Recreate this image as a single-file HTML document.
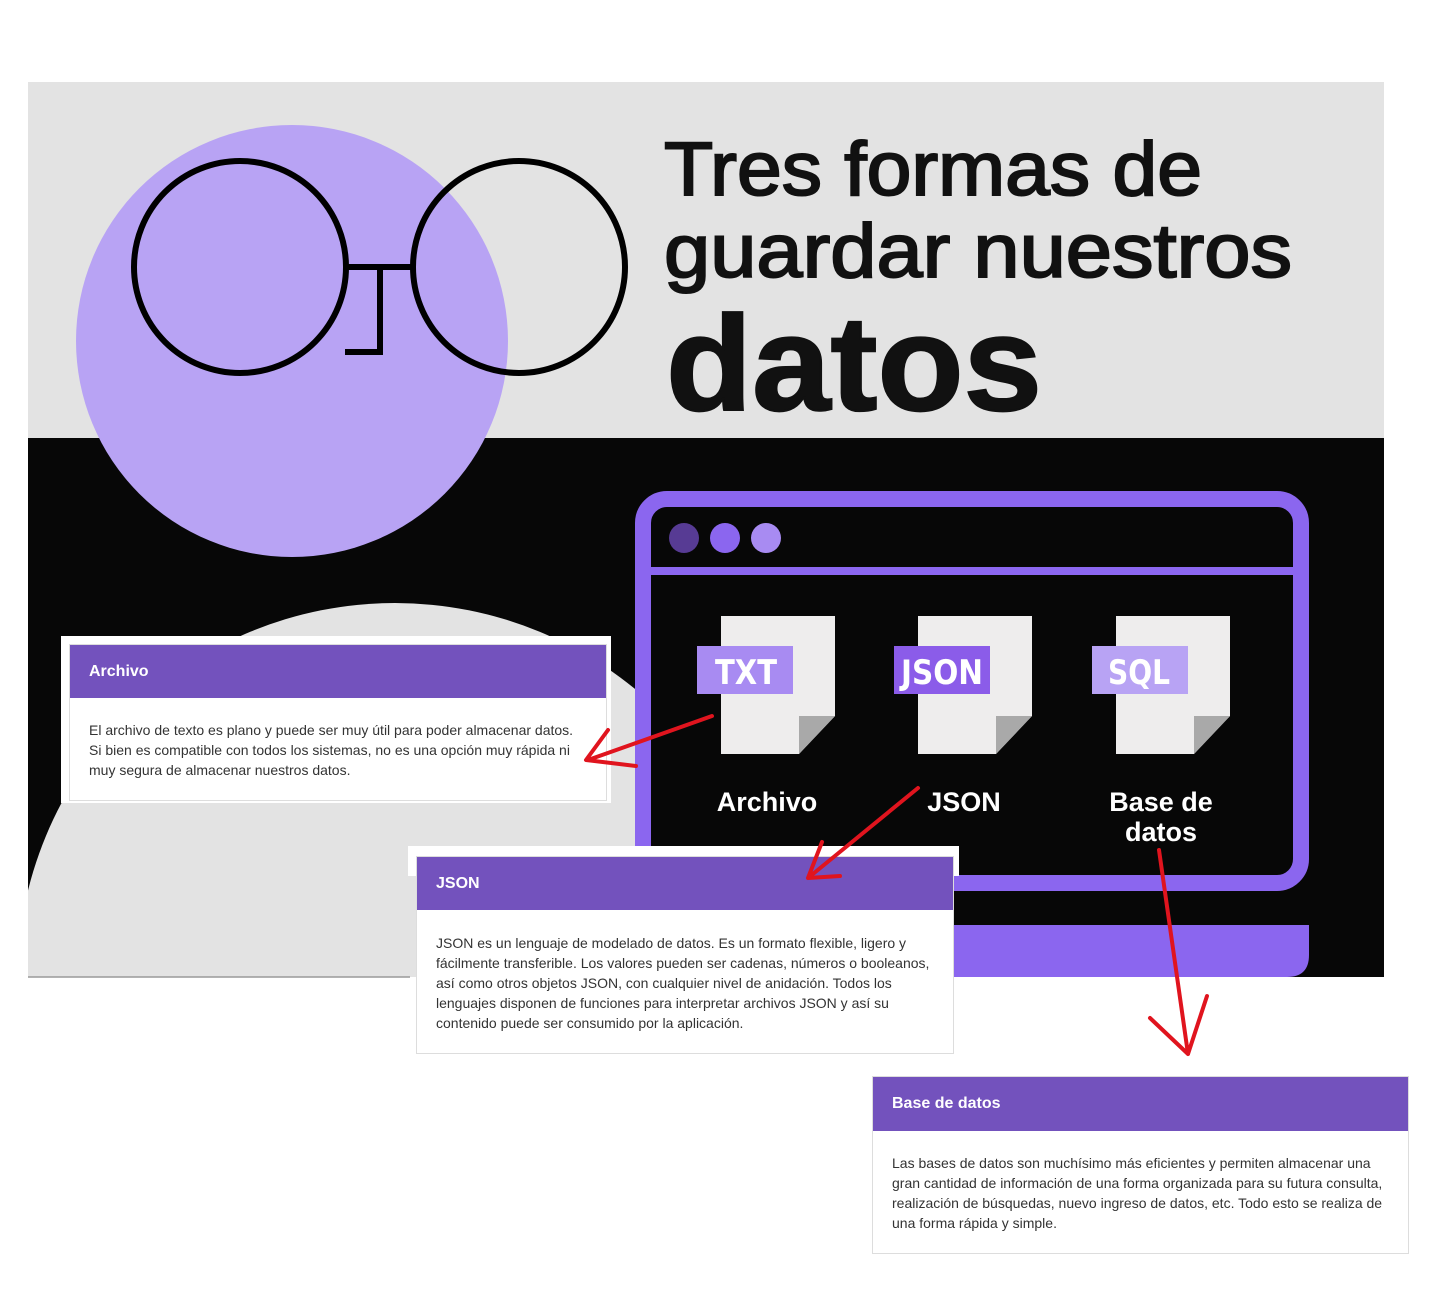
<!DOCTYPE html>
<html><head><meta charset="utf-8"><style>
body{margin:0;width:1448px;height:1308px;background:#fff;position:relative;overflow:hidden;font-family:"Liberation Sans",Arial,sans-serif}
.card{position:absolute;background:#fff;border:1px solid #ddd;box-sizing:border-box}
.card .h{background:#7352bd;color:#fff;font-weight:bold;font-size:16px;padding-left:19px;box-sizing:border-box;display:flex;align-items:center}
.card .b{color:#333;font-size:14px;line-height:20px;padding:0 19px}
</style></head><body>
<svg width="1448" height="1308" style="position:absolute;left:0;top:0">
<defs><clipPath id="c"><rect x="28" y="82" width="1356" height="895"/></clipPath></defs>
<rect x="28" y="82" width="1356" height="356" fill="#e3e3e3"/>
<rect x="28" y="438" width="1356" height="539" fill="#070707"/>
<g clip-path="url(#c)">
<circle cx="395" cy="981" r="378" fill="#e3e3e3"/>
</g>
<line x1="28" y1="977" x2="410" y2="977" stroke="#999" stroke-width="1.5"/>
<circle cx="292" cy="341" r="216" fill="#b8a3f4"/>
<g fill="none" stroke="#000" stroke-width="6">
<circle cx="240" cy="267" r="106"/>
<circle cx="519" cy="267" r="106"/>
<path d="M346 267H413M380 267V352H345"/>
</g>
<g fill="#111" stroke="#111" stroke-width="2" font-family="Liberation Sans">
<text x="664" y="195" font-size="76" textLength="538" lengthAdjust="spacingAndGlyphs">Tres formas de</text>
<text x="664" y="277" font-size="76" textLength="628" lengthAdjust="spacingAndGlyphs">guardar nuestros</text>
</g>
<text x="666" y="410" font-size="135" font-weight="bold" fill="#111" stroke="#111" stroke-width="2" textLength="376" lengthAdjust="spacingAndGlyphs" font-family="Liberation Sans">datos</text>
<path d="M640 925H1309V955Q1309 977 1287 977H640Z" fill="#8b66ef"/>
<rect x="643" y="499" width="658" height="384" rx="24" fill="#070707" stroke="#8b66ef" stroke-width="16"/>
<rect x="651" y="567" width="642" height="8" fill="#8b66ef"/>
<circle cx="684" cy="538" r="15" fill="#573b94"/>
<circle cx="725" cy="538" r="15" fill="#8b66ef"/>
<circle cx="766" cy="538" r="15" fill="#a88bf2"/>
<g font-size="34" font-weight="bold" fill="#fff" font-family="DejaVu Sans Condensed,DejaVu Sans">
<path d="M721 616H835V716L799 754H721Z" fill="#eeeded"/><path d="M799 716H835L799 754Z" fill="#a9a9a9"/>
<rect x="697" y="646" width="96" height="48" fill="#a88bf2"/>
<text x="715" y="684" textLength="62" lengthAdjust="spacingAndGlyphs">TXT</text>
<path d="M918 616H1032V716L996 754H918Z" fill="#eeeded"/><path d="M996 716H1032L996 754Z" fill="#a9a9a9"/>
<rect x="894" y="646" width="96" height="48" fill="#8b5ce9"/>
<text x="901" y="684" textLength="82" lengthAdjust="spacingAndGlyphs">JSON</text>
<path d="M1116 616H1230V716L1194 754H1116Z" fill="#eeeded"/><path d="M1194 716H1230L1194 754Z" fill="#a9a9a9"/>
<rect x="1092" y="646" width="96" height="48" fill="#b8a3f4"/>
<text x="1108" y="684" textLength="62" lengthAdjust="spacingAndGlyphs">SQL</text>
</g>
<g font-size="27" font-weight="bold" fill="#fff" text-anchor="middle" font-family="Liberation Sans">
<text x="767" y="811">Archivo</text>
<text x="964" y="811">JSON</text>
<text x="1161" y="811">Base de</text>
<text x="1161" y="841">datos</text>
</g>
</svg>
<div style="position:absolute;left:61px;top:636px;width:550px;height:167px;background:#fff"></div>
<div class="card" style="left:69px;top:644px;width:538px;height:157px">
<div class="h" style="height:53px">Archivo</div>
<div class="b" style="padding-top:22px">El archivo de texto es plano y puede ser muy útil para poder almacenar datos. Si bien es compatible con todos los sistemas, no es una opción muy rápida ni muy segura de almacenar nuestros datos.</div>
</div>
<div style="position:absolute;left:408px;top:846px;width:551px;height:30px;background:#fff"></div>
<div class="card" style="left:416px;top:856px;width:538px;height:198px">
<div class="h" style="height:53px">JSON</div>
<div class="b" style="padding-top:23px">JSON es un lenguaje de modelado de datos. Es un formato flexible, ligero y fácilmente transferible. Los valores pueden ser cadenas, números o booleanos, así como otros objetos JSON, con cualquier nivel de anidación. Todos los lenguajes disponen de funciones para interpretar archivos JSON y así su contenido puede ser consumido por la aplicación.</div>
</div>
<div class="card" style="left:872px;top:1076px;width:537px;height:178px">
<div class="h" style="height:54px">Base de datos</div>
<div class="b" style="padding-top:22px">Las bases de datos son muchísimo más eficientes y permiten almacenar una gran cantidad de información de una forma organizada para su futura consulta, realización de búsquedas, nuevo ingreso de datos, etc. Todo esto se realiza de una forma rápida y simple.</div>
</div>
<svg width="1448" height="1308" style="position:absolute;left:0;top:0;pointer-events:none">
<g fill="none" stroke="#e0141e" stroke-width="4" stroke-linecap="round" stroke-linejoin="round">
<path d="M712 716L588 760M608 730L586 760L636 766"/>
<path d="M918 788L808 878M822 842L808 878L840 876"/>
<path d="M1159 850L1188 1054M1150 1018L1188 1054L1207 996"/>
</g>
</svg>
</body></html>
